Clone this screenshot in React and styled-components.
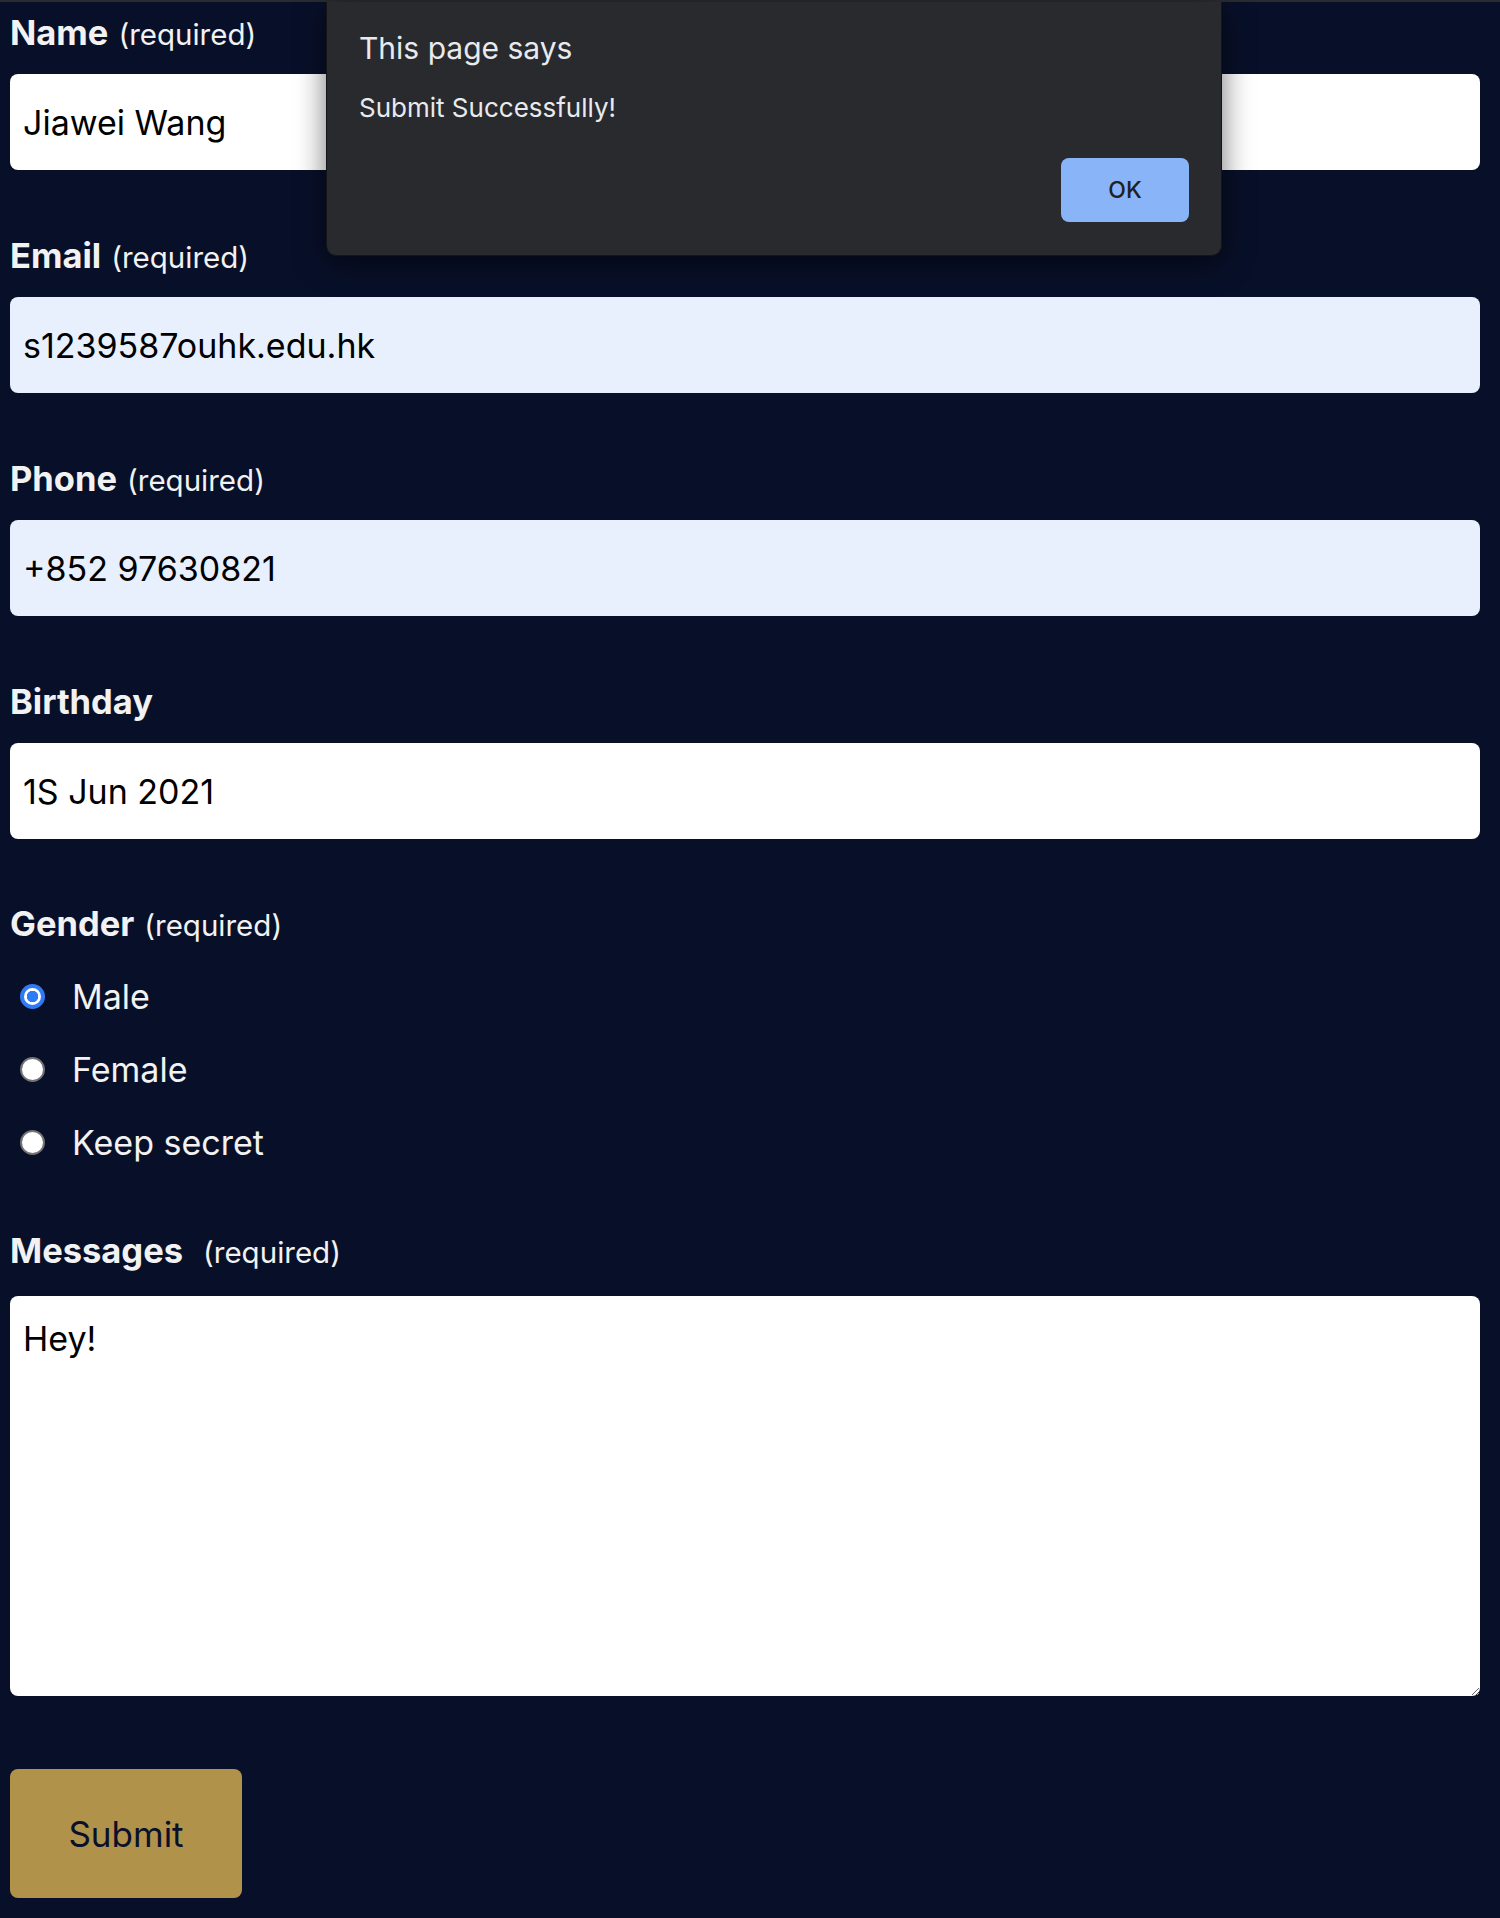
import React from 'react';
import styled, { createGlobalStyle } from 'styled-components';

const GlobalStyle = createGlobalStyle`
  html, body {
    margin: 0;
    padding: 0;
    background: #081029;
    font-family: "Inter", "Liberation Sans", sans-serif;
  }
  * { box-sizing: border-box; }
`;

const Page = styled.div`
  position: relative;
  min-height: 1918px;
  border-top: 2px solid #2b2c2f;
  padding: 12px 20px 20px 10px;
`;

const Form = styled.form`
  display: flex;
  flex-direction: column;
`;

const Field = styled.div`
  display: flex;
  flex-direction: column;
  gap: ${p => p.gap ?? 20}px;
  margin-bottom: ${p => p.bottom || 67}px;
`;

const Label = styled.label`
  display: block;
  height: 40px;
  font-size: 34.5px;
  font-weight: 700;
  line-height: 37px;
  color: #f2f2f2;
  white-space: nowrap;
`;

const Required = styled.span`
  font-size: 29.5px;
  font-weight: 400;
  margin-left: ${p => p.space || 10}px;
`;

const Input = styled.input`
  height: 96px;
  width: 100%;
  border: none;
  border-radius: 8px;
  padding: 0 13px;
  font-family: inherit;
  font-size: 34px;
  color: #000;
  background: ${p => (p.autofilled ? '#e8f0fe' : '#fff')};
  outline: none;
`;

const TextArea = styled.textarea`
  height: 400px;
  width: 100%;
  border: none;
  border-radius: 8px;
  padding: 22px 13px;
  font-family: inherit;
  font-size: 34px;
  line-height: 42px;
  color: #000;
  background: #fff;
  outline: none;
`;

const RadioGroup = styled.div`
  display: flex;
  flex-direction: column;
  gap: 25px;
  margin-top: 27.5px;
`;

const RadioRow = styled.label`
  display: flex;
  align-items: center;
  height: 48px;
  padding-left: 10px;
  gap: 27px;
  font-size: 34px;
  color: #f2f2f2;
`;

const Radio = styled.input`
  appearance: none;
  margin: 0;
  width: 25px;
  height: 25px;
  border-radius: 50%;
  background: #fff;
  border: 2px solid #737373;

  &:checked {
    border: 4px solid #2f7bf6;
    background: radial-gradient(circle, #2f7bf6 0 5.5px, #fff 6px);
  }
`;

const SubmitButton = styled.button`
  width: 232px;
  height: 129px;
  border: none;
  border-radius: 8px;
  background: #b0924a;
  color: #0a1029;
  font-family: inherit;
  font-size: 35px;
  cursor: pointer;
`;

const Dialog = styled.div`
  position: absolute;
  top: 0;
  left: 326px;
  width: 896px;
  height: 254px;
  display: flex;
  flex-direction: column;
  padding: 27.5px 32px 32px 32px;
  background: #292a2d;
  border: 1px solid #141518;
  border-top: none;
  border-radius: 0 0 10px 10px;
  box-shadow: 0 6px 30px rgba(0, 0, 0, 0.55);
  color: #e8eaed;
`;

const DialogTitle = styled.div`
  font-size: 30px;
  line-height: 36px;
`;

const DialogMessage = styled.div`
  margin-top: 26px;
  font-size: 26px;
  line-height: 32px;
`;

const DialogActions = styled.div`
  margin-top: 34px;
  display: flex;
  justify-content: flex-end;
`;

const OkButton = styled.button`
  width: 128px;
  height: 64px;
  border: none;
  border-radius: 8px;
  background: #8ab4f8;
  color: #202124;
  font-family: inherit;
  font-size: 23px;
  font-weight: 500;
`;

const genders = ['Male', 'Female', 'Keep secret'];

export default function App() {
  return (
    <>
      <GlobalStyle />
      <Page>
        <Form onSubmit={e => e.preventDefault()}>
          <Field>
            <Label htmlFor="name">
              Name<Required>(required)</Required>
            </Label>
            <Input id="name" defaultValue="Jiawei Wang" />
          </Field>
          <Field>
            <Label htmlFor="email">
              Email<Required>(required)</Required>
            </Label>
            <Input id="email" autofilled defaultValue="s1239587ouhk.edu.hk" />
          </Field>
          <Field>
            <Label htmlFor="phone">
              Phone<Required>(required)</Required>
            </Label>
            <Input id="phone" autofilled defaultValue="+852 97630821" />
          </Field>
          <Field bottom={66}>
            <Label htmlFor="birthday">Birthday</Label>
            <Input id="birthday" defaultValue="1S Jun 2021" />
          </Field>
          <Field gap={0} bottom={65.5}>
            <Label as="div">
              Gender<Required>(required)</Required>
            </Label>
            <RadioGroup>
              {genders.map((g, i) => (
                <RadioRow key={g}>
                  <Radio type="radio" name="gender" defaultChecked={i === 0} />
                  {g}
                </RadioRow>
              ))}
            </RadioGroup>
          </Field>
          <Field gap={24} bottom={73}>
            <Label htmlFor="msg">
              Messages<Required space={20}>(required)</Required>
            </Label>
            <TextArea id="msg" defaultValue="Hey!" />
          </Field>
          <div>
            <SubmitButton type="submit">Submit</SubmitButton>
          </div>
        </Form>

        <Dialog role="alertdialog">
          <DialogTitle>This page says</DialogTitle>
          <DialogMessage>Submit Successfully!</DialogMessage>
          <DialogActions>
            <OkButton>OK</OkButton>
          </DialogActions>
        </Dialog>
      </Page>
    </>
  );
}
